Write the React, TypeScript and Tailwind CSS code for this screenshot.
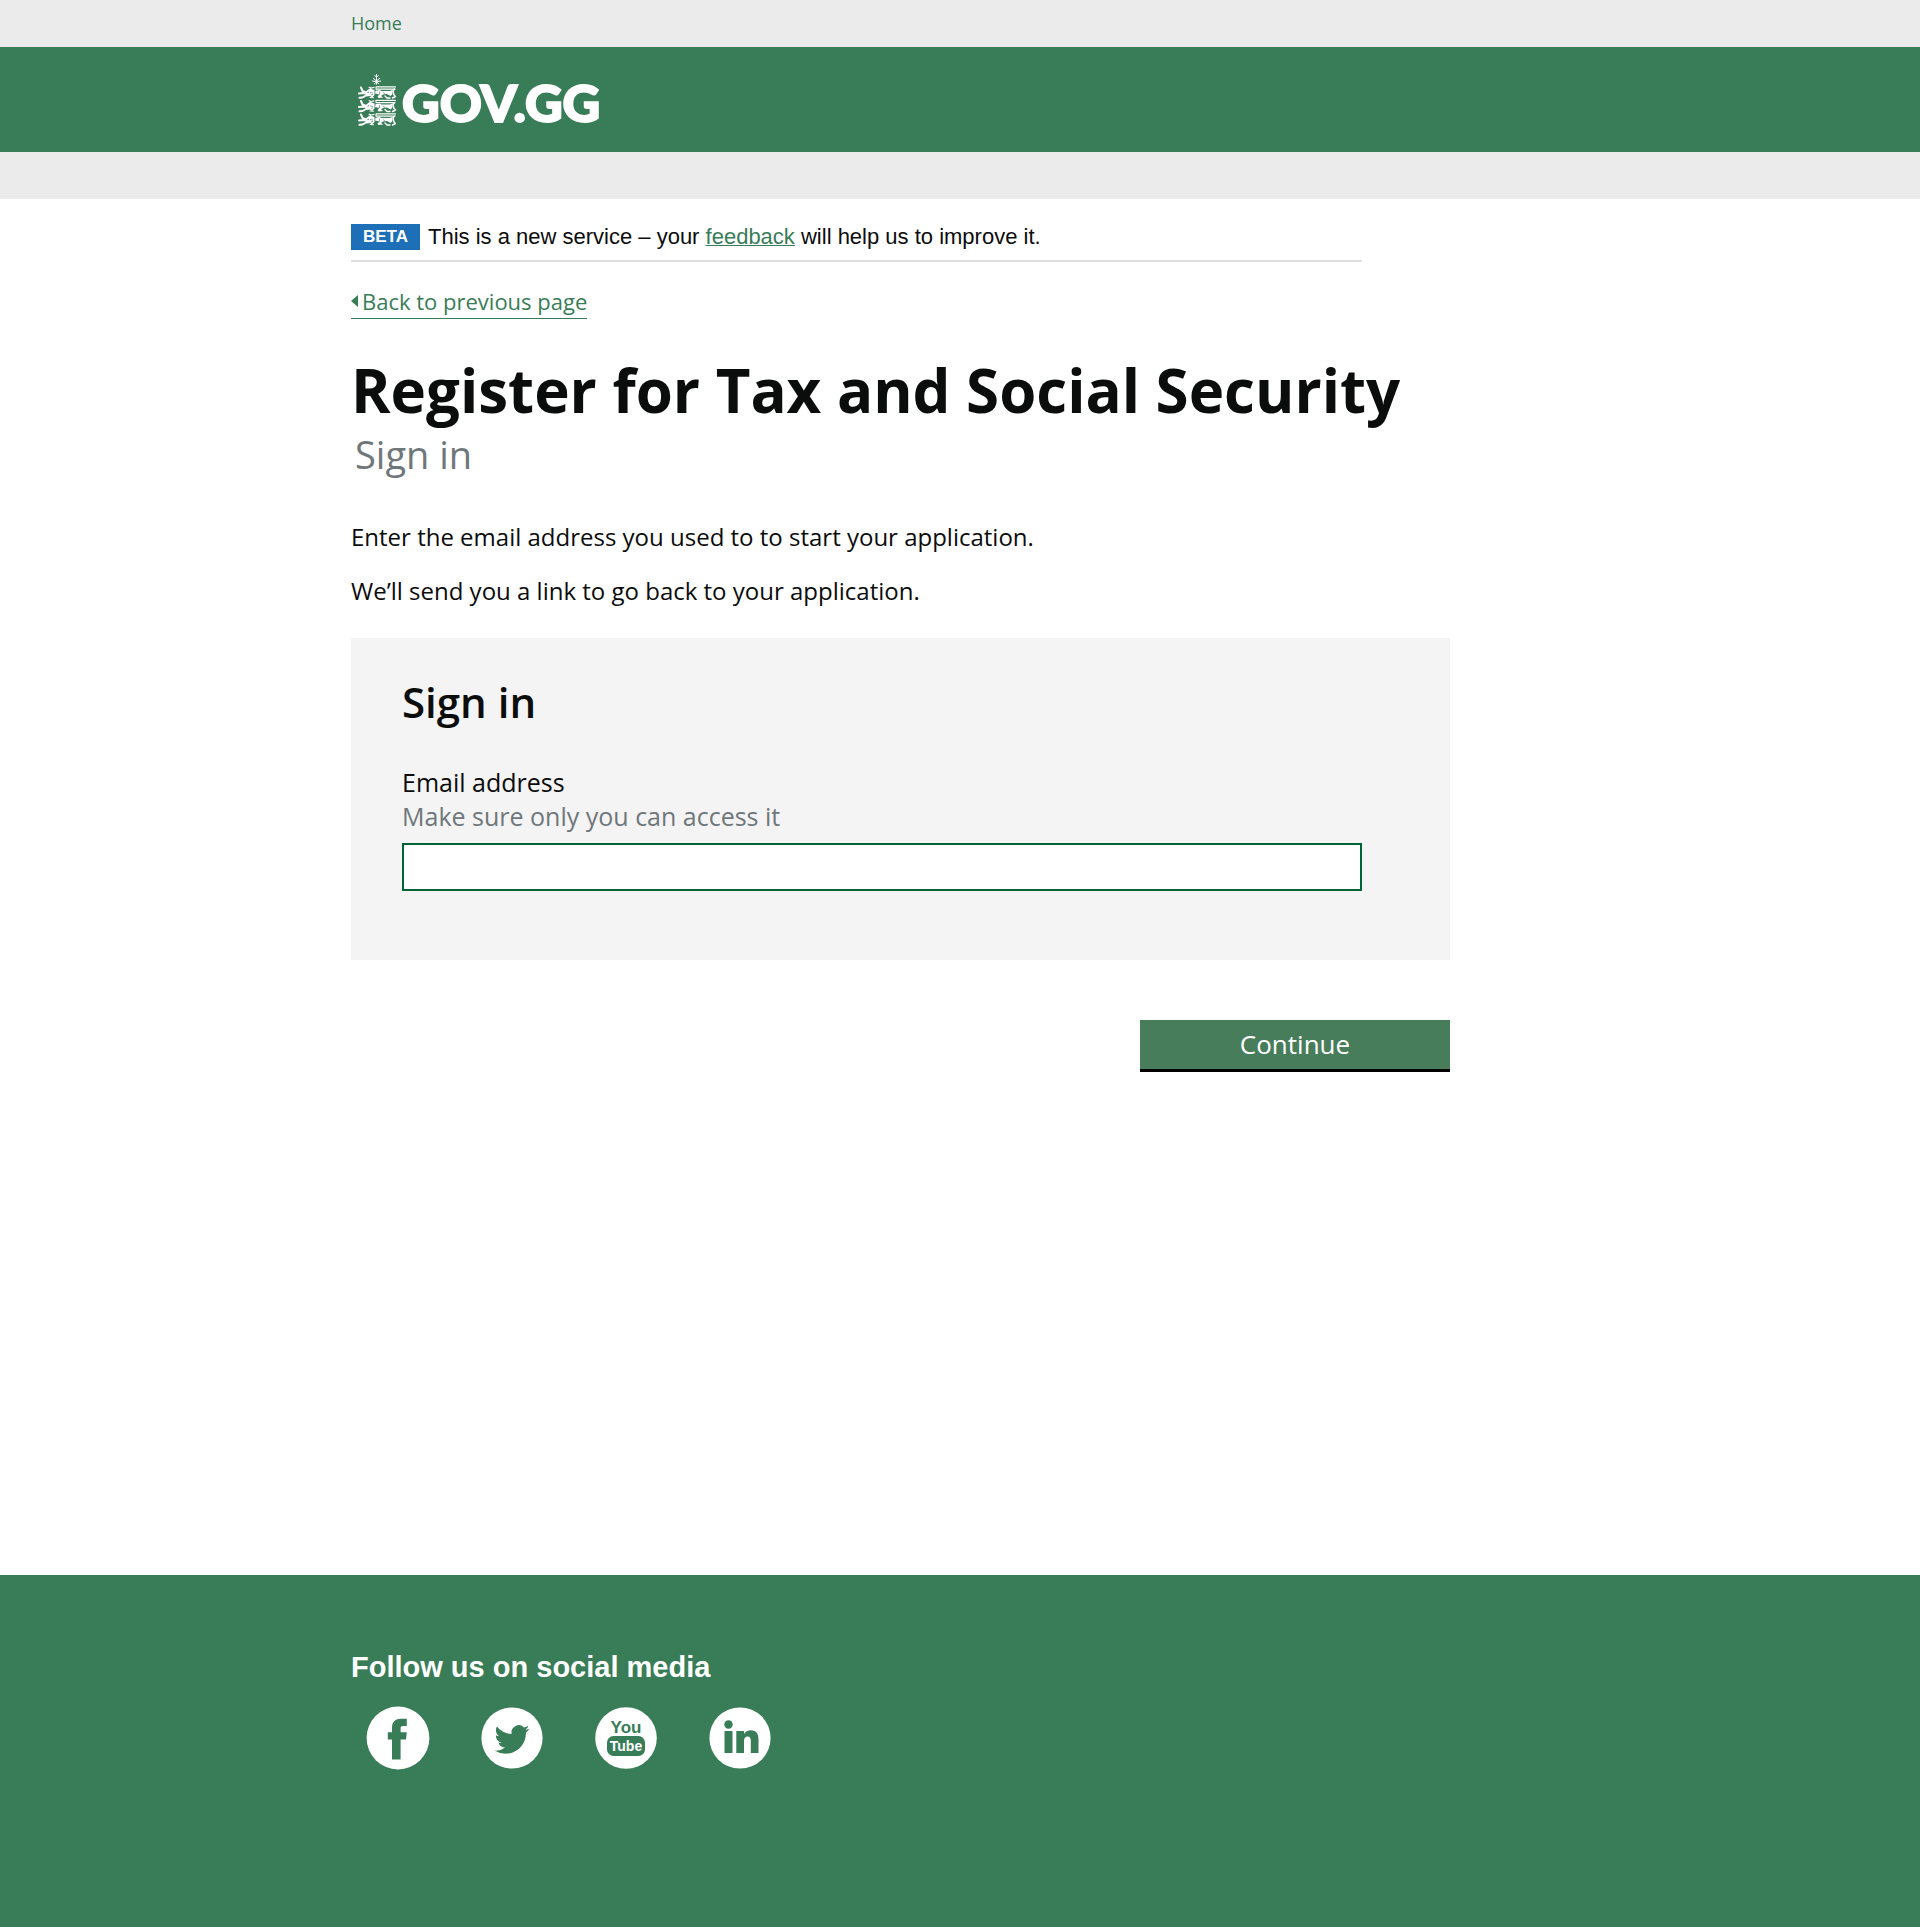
const lion = (
  <>
    <g fill="none" stroke="#fff" strokeLinecap="round" strokeLinejoin="round">
      <path strokeWidth="2" d="M3 1.500l1.500 3.500L8 6.500l4.500-3.500M1 7.500l4-.5 5 1 3.500-2M1.500 11.800l3-.3L8 9.500l4-.5" />
      <path strokeWidth="1.100" d="M11 1.200l2.500.8 2.500-.6M12 11.500l3.500.3M18 .900h19.500M18 .900v2.200h19" />
      <path strokeWidth="1.400" d="M36.500 3l-1.500 2 1 4 1.500 1.500-3 1.500M27 10l2 2h3" />
    </g>
    <path fill="#fff" d="M10.500 4.500l3-1.500 3 1v5l-2.500 2.500-2-1.500zM17.500 4.800l4-.8 2 1h8l3-1v4l-2 2-3.500-2-4 .500-2 1.500 2.500 1.500-5 .500-1-1.500 2-2-4.500-1z" />
    <path stroke="#387d57" strokeWidth=".6" fill="none" d="M12 6.500l3 .500M13 8.800l2-.300M21.500 5.500v3M25 6.500l2 1.500" />
  </>
);

function Crest() {
  return (
    <svg viewBox="0 0 40 52" className="h-[52px] w-10" aria-hidden="true">
      <path d="M18.500 0v10.500M18.500 3l-2-1.500M18.500 3l2-1.500M18.500 7l-3.500-3M18.500 7l3.500-3M18.500 7.500l-4.500-.500M18.500 7.500l4.500-.500M18.500 8l-2.500 2M18.500 8l2.500 2" fill="none" stroke="#fff" strokeWidth="1" />
      <g transform="translate(0 12)">{lion}</g>
      <g transform="translate(0 25.500)">{lion}</g>
      <g transform="translate(0 39)">{lion}</g>
    </svg>
  );
}

function Facebook() {
  return (
    <svg viewBox="0 0 64 64" className="size-16" aria-hidden="true">
      <circle cx="32" cy="32" r="31.400" fill="#fff" />
      <path d="M26 53.500V33.500h-4.200v-7.200H26v-4.800c0-5.500 3.500-8.800 9-8.800h5.800v7.200h-3.600c-1.800 0-2.600.800-2.600 2.400v4h6.200l-.800 7.200h-5.400v20z" fill="#387d57" />
    </svg>
  );
}

function Twitter() {
  return (
    <svg viewBox="0 0 64 64" className="size-16" aria-hidden="true">
      <circle cx="32" cy="32" r="30.600" fill="#fff" />
      <path transform="translate(14.500 16) scale(1.460)" d="M23.953 4.570a10 10 0 01-2.825.775 4.958 4.958 0 002.163-2.723c-.951.555-2.005.959-3.127 1.184a4.920 4.920 0 00-8.384 4.482C7.690 8.095 4.067 6.130 1.640 3.162a4.822 4.822 0 00-.666 2.475c0 1.710.870 3.213 2.188 4.096a4.904 4.904 0 01-2.228-.616v.060a4.923 4.923 0 003.946 4.827 4.996 4.996 0 01-2.212.085 4.936 4.936 0 004.604 3.417 9.867 9.867 0 01-6.102 2.105c-.390 0-.779-.023-1.170-.067a13.995 13.995 0 007.557 2.209c9.053 0 13.998-7.496 13.998-13.985 0-.210 0-.420-.015-.630A9.935 9.935 0 0024 4.590z" fill="#387d57" />
    </svg>
  );
}

function YouTube() {
  return (
    <svg viewBox="0 0 64 64" className="size-16" aria-hidden="true">
      <circle cx="32" cy="32" r="30.800" fill="#fff" />
      <rect x="13" y="30" width="38" height="20" rx="6.500" fill="#387d57" />
      <g fontFamily="'Liberation Sans Narrow', 'Liberation Sans', sans-serif" fontWeight="700" textAnchor="middle">
        <text x="32" y="26.500" fontSize="17" fill="#387d57">You</text>
        <text x="32" y="45" fontSize="14" fill="#fff">Tube</text>
      </g>
    </svg>
  );
}

function LinkedIn() {
  return (
    <svg viewBox="0 0 64 64" className="size-16" aria-hidden="true">
      <circle cx="32" cy="32" r="30.600" fill="#fff" />
      <g fill="#387d57">
        <circle cx="20.500" cy="18.500" r="4.200" />
        <path d="M16.500 25h8v22h-8zM28.300 25H36v3c1.400-2.300 3.800-3.700 6.800-3.700 5.600 0 7.700 3.700 7.700 9.200V47h-7.700V35c0-2.800-.900-4.400-3.100-4.400-2.400 0-3.700 1.700-3.700 4.400v12h-7.700z" />
      </g>
    </svg>
  );
}

const socials = [
  { name: "Facebook", Icon: Facebook },
  { name: "Twitter", Icon: Twitter },
  { name: "YouTube", Icon: YouTube },
  { name: "LinkedIn", Icon: LinkedIn },
];

const container = "mx-auto w-full max-w-[1218px]";

export default function App() {
  return (
    <div className="flex min-h-screen flex-col bg-white font-['Open_Sans',sans-serif] text-[#0b0c0c]">
      <nav className="bg-[#ebebeb]">
        <div className={container}>
          <a href="#home" className="block w-fit py-3 text-lg leading-[23px] text-[#387d57]">Home</a>
        </div>
      </nav>
      <header className="bg-[#387d57]">
        <div className={`${container} flex h-[105px] items-center`}>
          <a href="#gov" aria-label="GOV.GG" className="flex items-center gap-1 pl-[7px] text-white">
            <Crest />
            <span className="pt-1 font-[Lato,sans-serif] text-[52px] leading-[52px] font-black [-webkit-text-stroke:2px_white]">GOV.GG</span>
          </a>
        </div>
      </header>
      <div className="h-[47px] bg-[#ebebeb]" />

      <main className={`${container} flex-1 pt-[25px] pb-16`}>
        <div className="flex max-w-[1011px] items-center gap-2 border-b-2 border-[#dedede] pb-2.5 font-['Liberation_Sans',sans-serif]">
          <strong className="bg-[#1d70b8] px-3 text-[17px] leading-[26px] text-white">BETA</strong>
          <p className="text-[22px] leading-[26px]">
            This is a new service – your <a href="#feedback" className="text-[#387d57] underline decoration-1">feedback</a> will help us to improve it.
          </p>
        </div>

        <a href="#back" className="mt-[23px] flex w-fit items-center gap-1 border-b border-[#387d57] pb-px text-[22px] leading-8 text-[#387d57]">
          <svg viewBox="0 0 7 12" className="h-3 w-[7px]" fill="currentColor" aria-hidden="true"><path d="M7 0v12L0 6z" /></svg>
          Back to previous page
        </a>

        <h1 className="mt-[30px] text-[60px] leading-[82px] font-bold">Register for Tax and Social Security</h1>
        <p className="pl-1 text-[38px] leading-[46px] text-[#6f777b]">Sign in</p>

        <div className="mt-[43px] space-y-5 text-2xl leading-[34px]">
          <p>Enter the email address you used to to start your application.</p>
          <p>We’ll send you a link to go back to your application.</p>
        </div>

        <form className="mt-[30px] max-w-[1099px]" onSubmit={(e) => e.preventDefault()}>
          <section className="bg-[#f4f4f4] pt-[35px] pr-[88px] pb-[69px] pl-[51px]">
            <h2 className="text-[42px] leading-[58px] font-semibold">Sign in</h2>
            <label htmlFor="email" className="mt-[34px] block text-[25px] leading-[34px]">Email address</label>
            <p id="email-hint" className="text-[25px] leading-[34px] text-[#6f777b]">Make sure only you can access it</p>
            <input id="email" type="email" aria-describedby="email-hint" className="mt-2.5 block h-12 w-full border-2 border-[#006435] bg-white px-3 text-2xl" />
          </section>
          <button type="submit" className="mt-[60px] ml-auto block w-[310px] border-b-[3px] border-black bg-[#477d5a] py-2 text-[26px] leading-[33px] text-white">Continue</button>
        </form>
      </main>

      <footer className="bg-[#387d57] pt-[74px] pb-[157px]">
        <div className={container}>
          <h2 className="font-['Liberation_Sans',sans-serif] text-[29px] leading-9 font-bold text-white">Follow us on social media</h2>
          <ul className="mt-[21px] flex gap-[50px] pl-[15px]">
            {socials.map(({ name, Icon }) => (
              <li key={name}>
                <a href={`#${name.toLowerCase()}`} aria-label={name} className="block"><Icon /></a>
              </li>
            ))}
          </ul>
        </div>
      </footer>
    </div>
  );
}
